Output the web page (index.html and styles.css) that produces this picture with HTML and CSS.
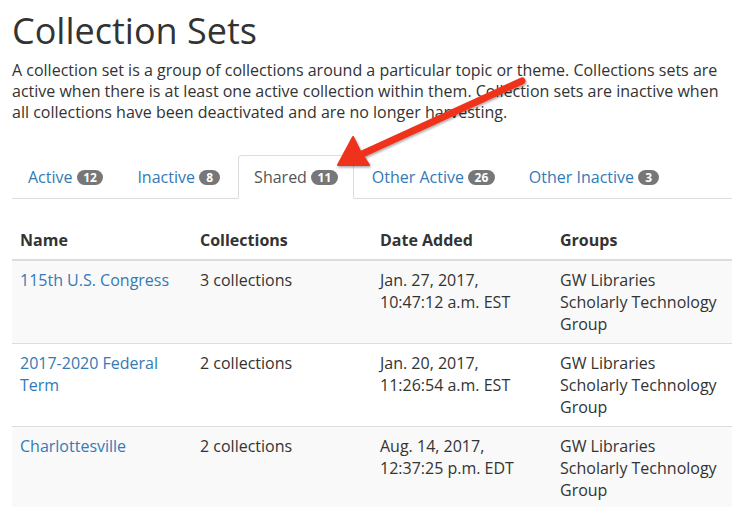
FILE: index.html
```html
<!DOCTYPE html>
<html>
<head>
<meta charset="utf-8">
<link rel="stylesheet" href="styles.css">
</head>
<body>
<div class="page">
  <h1 class="title">Collection Sets</h1>
  <p class="intro">A collection set is a group of collections around a particular topic or theme. Collections sets are active when there is at least one active collection within them. Collection sets are inactive when all collections have been deactivated and are no longer harvesting.</p>
  <ul class="tabs">
    <li class="tab"><a href="#">Active <span class="badge">12</span></a></li>
    <li class="tab"><a href="#">Inactive <span class="badge">8</span></a></li>
    <li class="tab active"><a href="#">Shared <span class="badge">11</span></a></li>
    <li class="tab"><a href="#">Other Active <span class="badge">26</span></a></li>
    <li class="tab"><a href="#">Other Inactive <span class="badge">3</span></a></li>
  </ul>
  <table class="sets">
    <thead>
      <tr><th>Name</th><th>Collections</th><th>Date Added</th><th>Groups</th></tr>
    </thead>
    <tbody>
      <tr class="odd"><td><a href="#">115th U.S. Congress</a></td><td>3 collections</td><td>Jan. 27, 2017, 10:47:12 a.m. EST</td><td>GW Libraries<br>Scholarly Technology Group</td></tr>
      <tr><td><a href="#">2017-2020 Federal Term</a></td><td>2 collections</td><td>Jan. 20, 2017, 11:26:54 a.m. EST</td><td>GW Libraries<br>Scholarly Technology Group</td></tr>
      <tr class="odd"><td><a href="#">Charlottesville</a></td><td>2 collections</td><td>Aug. 14, 2017, 12:37:25 p.m. EDT</td><td>GW Libraries<br>Scholarly Technology Group</td></tr>
    </tbody>
  </table>
</div>
<svg class="arrow" width="738" height="507" viewBox="0 0 738 507">
  <defs>
    <filter id="sh" x="-20%" y="-20%" width="140%" height="140%">
      <feDropShadow dx="1" dy="1.5" stdDeviation="1.2" flood-color="#000" flood-opacity="0.35"/>
    </filter>
  </defs>
  <g filter="url(#sh)">
    <line x1="522" y1="81" x2="360" y2="155" stroke="#ee321c" stroke-width="7" stroke-linecap="round"/>
    <path d="M338 165 L353 137 L360 151 L369 165 Z" fill="#ee321c" stroke="#ee321c" stroke-width="2" stroke-linejoin="round"/>
  </g>
</svg>
</body>
</html>
```

FILE: styles.css
```css
html, body {
  margin: 0;
  padding: 0;
  background: #fff;
}
body {
  font-family: "Open Sans", "Liberation Sans", sans-serif;
  font-size: 16px;
  line-height: 1.42857;
  color: #333;
}
.page {
  width: 720px;
  margin-left: 12px;
}
.title {
  font-size: 36px;
  font-weight: 400;
  line-height: 1.1;
  margin: 11px 0 9px;
}
.intro {
  margin: 0 0 32px;
  line-height: 21px;
}
.tabs {
  list-style: none;
  margin: 0;
  padding: 0;
  display: flex;
  border-bottom: 1px solid #ddd;
}
.tab {
  margin-right: 2px;
  margin-bottom: -1px;
}
.tab a {
  display: block;
  padding: 10px 15px;
  color: #337ab7;
  text-decoration: none;
  border: 1px solid transparent;
  border-radius: 4px 4px 0 0;
}
.tab.active a {
  color: #555;
  background: #fff;
  border-color: #ddd #ddd transparent;
}
.badge {
  display: inline-block;
  min-width: 8px;
  padding: 2px 6.5px;
  font-size: 12px;
  font-weight: 700;
  line-height: 11px;
  color: #fff;
  background: #777;
  border-radius: 10px;
  vertical-align: middle;
  position: relative;
  top: -1px;
  text-align: center;
}
.sets {
  width: 720px;
  table-layout: fixed;
  border-collapse: collapse;
  border-spacing: 0;
  margin-top: 22px;
}
.sets th, .sets td {
  padding: 8px;
  text-align: left;
  vertical-align: top;
  line-height: 22px;
}
.sets th {
  font-weight: 700;
  border-bottom: 2px solid #ddd;
}
.sets td {
  border-top: 1px solid #ddd;
}
.sets thead + tbody tr:first-child td {
  border-top: 0;
}
.sets tr.odd td {
  background: #f9f9f9;
}
.sets a {
  color: #337ab7;
  text-decoration: none;
}
.arrow {
  position: absolute;
  left: 0;
  top: 0;
  pointer-events: none;
}
```
